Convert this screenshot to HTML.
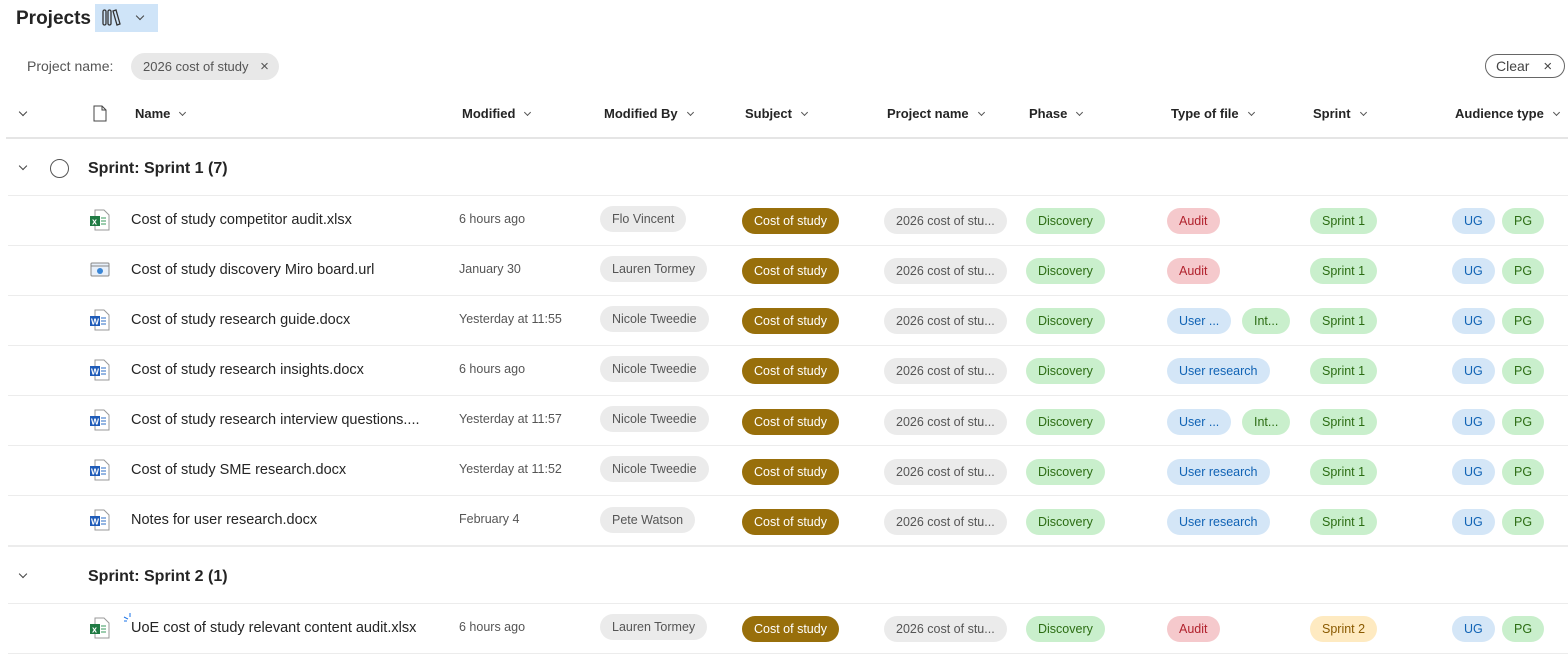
<!DOCTYPE html>
<html><head><meta charset="utf-8"><style>
*{box-sizing:border-box;margin:0;padding:0}
body{width:1568px;height:663px;overflow:hidden;background:#fff;font-family:"Segoe UI","Liberation Sans",sans-serif;color:#242424;position:relative}
.a{position:absolute}
.p{position:absolute;height:26px;line-height:26px;border-radius:13px;font-size:12.5px;padding:0 12px;white-space:nowrap}
.g{background:#ebebeb;color:#555}
.br{background:#986f0b;color:#fff}
.gr{background:#c9efcc;color:#2c6d13}
.rd{background:#f5c9cc;color:#b1222d}
.bl{background:#d4e6f7;color:#1063b5}
.ye{background:#feeac1;color:#8a5a00}
.row{position:absolute;left:0;width:1568px;height:50px}
.row .ln{position:absolute;left:8px;right:0;bottom:0;height:1px;background:#ececec}
.nm{position:absolute;left:131px;top:16px;font-size:14.5px;color:#242424}
.dt{position:absolute;left:459px;top:16px;font-size:12.5px;color:#555}
.hd{position:absolute;top:106px;font-size:13px;font-weight:bold;color:#242424}
.hd i{display:inline-block;width:5px;height:5px;border-right:1.2px solid #555;border-bottom:1.2px solid #555;transform:rotate(45deg);margin-left:10px;vertical-align:3px}
.chev{display:inline-block;width:6px;height:6px;border-right:1.3px solid #444;border-bottom:1.3px solid #444;transform:rotate(45deg)}
</style></head><body>
<div class="a" style="left:16px;top:8px;font-size:19px;font-weight:bold">Projects</div>
<div class="a" style="left:95px;top:4px;width:63px;height:28px;background:#cfe4f8"></div>
<svg class="a" style="left:102px;top:9px" width="22" height="18" viewBox="0 0 22 18"><g fill="none" stroke="#333" stroke-width="1.3"><rect x="1" y="1" width="3" height="15" rx="1.5"/><rect x="6" y="1" width="3" height="15" rx="1.5"/><path d="M11 2 L15 16 L18 15 L14 1 Z"/></g></svg>
<div class="a chev" style="left:137px;top:13px"></div>
<div class="a" style="left:27px;top:58px;font-size:14px;color:#555">Project name:</div>
<div class="a" style="left:131px;top:53px;width:148px;height:27px;border-radius:14px;background:#e8e8e8;font-size:13px;color:#555;line-height:27px;padding-left:12px">2026 cost of study <span style="margin-left:8px;font-size:15px">×</span></div>
<div class="a" style="left:1485px;top:54px;width:80px;height:24px;border:1px solid #666;border-radius:12px;font-size:14px;color:#444;line-height:22px;padding-left:10px">Clear <span style="margin-left:10px;font-size:15px">×</span></div>
<div class="a chev" style="left:20px;top:109px"></div>
<svg class="a" style="left:93px;top:105px" width="14" height="17" viewBox="0 0 14 17"><path d="M1 1 H9 L13 5 V16 H1 Z M9 1 V5 H13" fill="none" stroke="#444" stroke-width="1"/></svg>
<div class="hd" style="left:135px">Name<i></i></div>
<div class="hd" style="left:462px">Modified<i></i></div>
<div class="hd" style="left:604px">Modified By<i></i></div>
<div class="hd" style="left:745px">Subject<i></i></div>
<div class="hd" style="left:887px">Project name<i></i></div>
<div class="hd" style="left:1029px">Phase<i></i></div>
<div class="hd" style="left:1171px">Type of file<i></i></div>
<div class="hd" style="left:1313px">Sprint<i></i></div>
<div class="hd" style="left:1455px">Audience type<i></i></div>
<div class="a" style="left:6px;right:0;top:137px;height:2px;background:#e5e5e5"></div>
<div class="a chev" style="left:20px;top:163px"></div>
<div class="a" style="left:50px;top:159px;width:19px;height:19px;border:1.3px solid #555;border-radius:50%"></div>
<div class="a" style="left:88px;top:160px;font-size:16px;font-weight:bold">Sprint: Sprint 1 (7)</div>
<div class="a" style="left:8px;right:0;top:195px;height:1px;background:#ececec"></div>

<div class="row" style="top:196px">
<svg class="a" style="left:89px;top:13px" width="22" height="22" viewBox="0 0 22 22"><path d="M6 1 H15 L20 6 V21 H6 Z" fill="#fff" stroke="#999"/><path d="M12 9h5M12 12h5M12 15h5" stroke="#3a9a5c"/><rect x="1" y="7" width="10" height="10" fill="#1f7a43"/><text x="3" y="15.5" font-size="9" fill="#fff" font-family="Liberation Sans" font-weight="bold">x</text></svg>
<div class="nm">Cost of study competitor audit.xlsx</div><div class="dt">6 hours ago</div>
<div class="p g" style="left:600px;top:10px">Flo Vincent</div><div class="p br" style="left:742px;top:12px">Cost of study</div><div class="p g" style="left:884px;top:12px">2026 cost of stu...</div><div class="p gr" style="left:1026px;top:12px">Discovery</div><div class="p rd" style="left:1167px;top:12px">Audit</div><div class="p gr" style="left:1310px;top:12px">Sprint 1</div><div class="p bl" style="left:1452px;top:12px">UG</div><div class="p gr" style="left:1502px;top:12px">PG</div><div class="ln"></div></div>

<div class="row" style="top:246px">
<svg class="a" style="left:89px;top:14px" width="22" height="20" viewBox="0 0 22 20"><rect x="2" y="3" width="18" height="13" rx="1" fill="#e8f0fa" stroke="#888"/><path d="M2 6h18" stroke="#888"/><circle cx="11" cy="11" r="3" fill="#3a86d6"/></svg>
<div class="nm">Cost of study discovery Miro board.url</div><div class="dt">January 30</div>
<div class="p g" style="left:600px;top:10px">Lauren Tormey</div><div class="p br" style="left:742px;top:12px">Cost of study</div><div class="p g" style="left:884px;top:12px">2026 cost of stu...</div><div class="p gr" style="left:1026px;top:12px">Discovery</div><div class="p rd" style="left:1167px;top:12px">Audit</div><div class="p gr" style="left:1310px;top:12px">Sprint 1</div><div class="p bl" style="left:1452px;top:12px">UG</div><div class="p gr" style="left:1502px;top:12px">PG</div><div class="ln"></div></div>

<div class="row" style="top:296px">
<svg class="a" style="left:89px;top:13px" width="22" height="22" viewBox="0 0 22 22"><path d="M6 1 H15 L20 6 V21 H6 Z" fill="#fff" stroke="#999"/><path d="M12 9h5M12 12h5M12 15h5" stroke="#2b6cc4"/><rect x="1" y="7" width="10" height="10" fill="#1e5bb8"/><text x="2" y="15.5" font-size="8.5" fill="#fff" font-family="Liberation Sans" font-weight="bold">W</text></svg>
<div class="nm">Cost of study research guide.docx</div><div class="dt">Yesterday at 11:55</div>
<div class="p g" style="left:600px;top:10px">Nicole Tweedie</div><div class="p br" style="left:742px;top:12px">Cost of study</div><div class="p g" style="left:884px;top:12px">2026 cost of stu...</div><div class="p gr" style="left:1026px;top:12px">Discovery</div><div class="p bl" style="left:1167px;top:12px">User ...</div><div class="p gr" style="left:1242px;top:12px">Int...</div><div class="p gr" style="left:1310px;top:12px">Sprint 1</div><div class="p bl" style="left:1452px;top:12px">UG</div><div class="p gr" style="left:1502px;top:12px">PG</div><div class="ln"></div></div>

<div class="row" style="top:346px">
<svg class="a" style="left:89px;top:13px" width="22" height="22" viewBox="0 0 22 22"><path d="M6 1 H15 L20 6 V21 H6 Z" fill="#fff" stroke="#999"/><path d="M12 9h5M12 12h5M12 15h5" stroke="#2b6cc4"/><rect x="1" y="7" width="10" height="10" fill="#1e5bb8"/><text x="2" y="15.5" font-size="8.5" fill="#fff" font-family="Liberation Sans" font-weight="bold">W</text></svg>
<div class="nm">Cost of study research insights.docx</div><div class="dt">6 hours ago</div>
<div class="p g" style="left:600px;top:10px">Nicole Tweedie</div><div class="p br" style="left:742px;top:12px">Cost of study</div><div class="p g" style="left:884px;top:12px">2026 cost of stu...</div><div class="p gr" style="left:1026px;top:12px">Discovery</div><div class="p bl" style="left:1167px;top:12px">User research</div><div class="p gr" style="left:1310px;top:12px">Sprint 1</div><div class="p bl" style="left:1452px;top:12px">UG</div><div class="p gr" style="left:1502px;top:12px">PG</div><div class="ln"></div></div>

<div class="row" style="top:396px">
<svg class="a" style="left:89px;top:13px" width="22" height="22" viewBox="0 0 22 22"><path d="M6 1 H15 L20 6 V21 H6 Z" fill="#fff" stroke="#999"/><path d="M12 9h5M12 12h5M12 15h5" stroke="#2b6cc4"/><rect x="1" y="7" width="10" height="10" fill="#1e5bb8"/><text x="2" y="15.5" font-size="8.5" fill="#fff" font-family="Liberation Sans" font-weight="bold">W</text></svg>
<div class="nm">Cost of study research interview questions....</div><div class="dt">Yesterday at 11:57</div>
<div class="p g" style="left:600px;top:10px">Nicole Tweedie</div><div class="p br" style="left:742px;top:13px">Cost of study</div><div class="p g" style="left:884px;top:13px">2026 cost of stu...</div><div class="p gr" style="left:1026px;top:13px">Discovery</div><div class="p bl" style="left:1167px;top:13px">User ...</div><div class="p gr" style="left:1242px;top:13px">Int...</div><div class="p gr" style="left:1310px;top:13px">Sprint 1</div><div class="p bl" style="left:1452px;top:13px">UG</div><div class="p gr" style="left:1502px;top:13px">PG</div><div class="ln"></div></div>

<div class="row" style="top:446px">
<svg class="a" style="left:89px;top:13px" width="22" height="22" viewBox="0 0 22 22"><path d="M6 1 H15 L20 6 V21 H6 Z" fill="#fff" stroke="#999"/><path d="M12 9h5M12 12h5M12 15h5" stroke="#2b6cc4"/><rect x="1" y="7" width="10" height="10" fill="#1e5bb8"/><text x="2" y="15.5" font-size="8.5" fill="#fff" font-family="Liberation Sans" font-weight="bold">W</text></svg>
<div class="nm">Cost of study SME research.docx</div><div class="dt">Yesterday at 11:52</div>
<div class="p g" style="left:600px;top:10px">Nicole Tweedie</div><div class="p br" style="left:742px;top:13px">Cost of study</div><div class="p g" style="left:884px;top:13px">2026 cost of stu...</div><div class="p gr" style="left:1026px;top:13px">Discovery</div><div class="p bl" style="left:1167px;top:13px">User research</div><div class="p gr" style="left:1310px;top:13px">Sprint 1</div><div class="p bl" style="left:1452px;top:13px">UG</div><div class="p gr" style="left:1502px;top:13px">PG</div><div class="ln"></div></div>

<div class="row" style="top:496px">
<svg class="a" style="left:89px;top:13px" width="22" height="22" viewBox="0 0 22 22"><path d="M6 1 H15 L20 6 V21 H6 Z" fill="#fff" stroke="#999"/><path d="M12 9h5M12 12h5M12 15h5" stroke="#2b6cc4"/><rect x="1" y="7" width="10" height="10" fill="#1e5bb8"/><text x="2" y="15.5" font-size="8.5" fill="#fff" font-family="Liberation Sans" font-weight="bold">W</text></svg>
<div class="nm">Notes for user research.docx</div><div class="dt">February 4</div>
<div class="p g" style="left:600px;top:11px">Pete Watson</div><div class="p br" style="left:742px;top:13px">Cost of study</div><div class="p g" style="left:884px;top:13px">2026 cost of stu...</div><div class="p gr" style="left:1026px;top:13px">Discovery</div><div class="p bl" style="left:1167px;top:13px">User research</div><div class="p gr" style="left:1310px;top:13px">Sprint 1</div><div class="p bl" style="left:1452px;top:13px">UG</div><div class="p gr" style="left:1502px;top:13px">PG</div></div>
<div class="a" style="left:8px;right:0;top:545px;height:2px;background:#ececec"></div>

<div class="a chev" style="left:20px;top:571px"></div>
<div class="a" style="left:88px;top:568px;font-size:16px;font-weight:bold">Sprint: Sprint 2 (1)</div>
<div class="a" style="left:8px;right:0;top:603px;height:1px;background:#ececec"></div>

<div class="row" style="top:604px">
<svg class="a" style="left:89px;top:13px" width="22" height="22" viewBox="0 0 22 22"><path d="M6 1 H15 L20 6 V21 H6 Z" fill="#fff" stroke="#999"/><path d="M12 9h5M12 12h5M12 15h5" stroke="#3a9a5c"/><rect x="1" y="7" width="10" height="10" fill="#1f7a43"/><text x="3" y="15.5" font-size="9" fill="#fff" font-family="Liberation Sans" font-weight="bold">x</text></svg>
<svg class="a" style="left:123px;top:8px" width="10" height="10" viewBox="0 0 10 10"><path d="M1 5 L5 7 M7 1 V5 M1 9 H4" stroke="#1a73e8" stroke-width="1"/></svg>
<div class="nm">UoE cost of study relevant content audit.xlsx</div><div class="dt">6 hours ago</div>
<div class="p g" style="left:600px;top:10px">Lauren Tormey</div><div class="p br" style="left:742px;top:12px">Cost of study</div><div class="p g" style="left:884px;top:12px">2026 cost of stu...</div><div class="p gr" style="left:1026px;top:12px">Discovery</div><div class="p rd" style="left:1167px;top:12px">Audit</div><div class="p ye" style="left:1310px;top:12px">Sprint 2</div><div class="p bl" style="left:1452px;top:12px">UG</div><div class="p gr" style="left:1502px;top:12px">PG</div><div class="ln"></div></div>
</body></html>
